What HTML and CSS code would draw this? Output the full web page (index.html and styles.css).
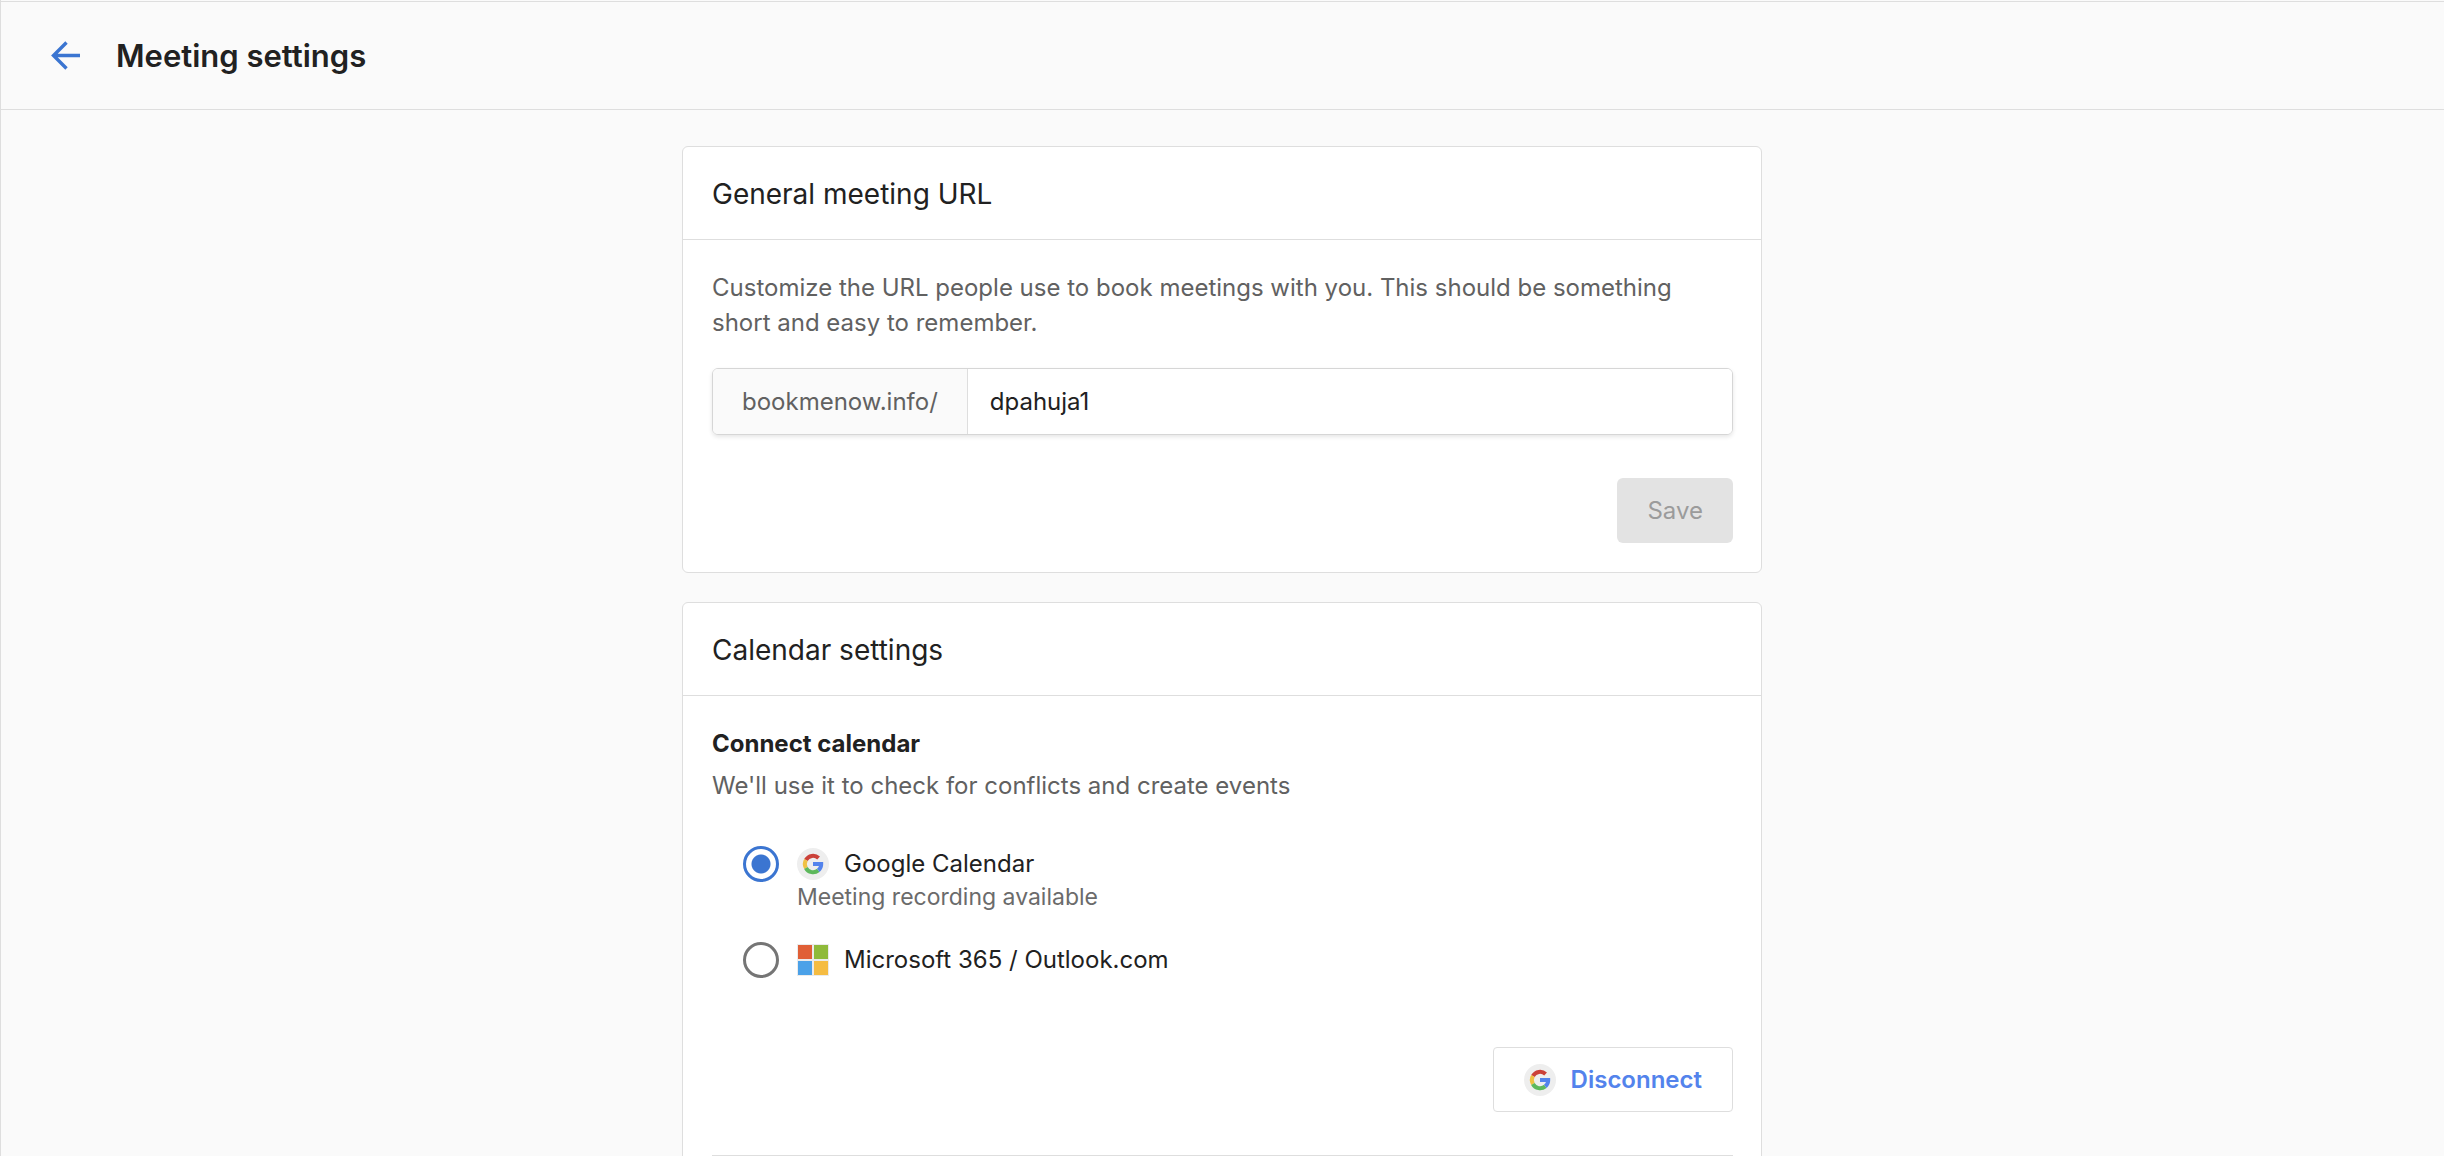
FILE: index.html
```html
<!DOCTYPE html>
<html lang="en">
<head>
    <meta charset="utf-8">
    <title>Meeting settings</title>
    <link rel="stylesheet" href="styles.css">
</head>
<body>
    <!-- Shared Google badge -->
    <svg class="sprite" aria-hidden="true">
        <symbol id="google" viewBox="0 0 32 32">
            <circle cx="16" cy="16" r="16" fill="#eeeeee"/>
            <g fill="none" stroke-width="4">
                <path d="M21.6 10A8.2 8.2 0 0 0 8.9 12" stroke="#cb4139"/>
                <path d="M8.9 12a8.2 8.2 0 0 0 0 8" stroke="#efc143"/>
                <path d="M8.9 20a8.2 8.2 0 0 0 12.4 2.4" stroke="#5db85c"/>
                <path d="M21.3 22.4A8.2 8.2 0 0 0 24.2 16H16" stroke="#5383ec"/>
            </g>
        </symbol>
    </svg>

    <header class="page-header">
        <a class="back" href="#" aria-label="Back">
            <svg width="30" height="30" viewBox="0 0 30 30">
                <path d="M16.5 1.5l-13 13 13 13M3.5 14.5H30" fill="none" stroke="#3b75d1" stroke-width="3.4"/>
            </svg>
        </a>
        <h1>Meeting settings</h1>
    </header>

    <main class="content">
        <section class="card">
            <h2 class="card-title">General meeting URL</h2>
            <form class="card-body">
                <label class="text" for="slug">Customize the URL people use to book meetings with you. This should be something short and easy to remember.</label>
                <div class="url-field">
                    <span class="url-prefix">bookmenow.info/</span>
                    <input class="url-input" id="slug" type="text" value="dpahuja1">
                </div>
                <div class="actions">
                    <button class="btn btn-save" type="button" disabled>Save</button>
                </div>
            </form>
        </section>

        <section class="card">
            <h2 class="card-title">Calendar settings</h2>
            <div class="card-body">
                <h3 class="subtitle">Connect calendar</h3>
                <p class="text">We'll use it to check for conflicts and create events</p>

                <div class="options">
                    <div class="option">
                        <input class="radio" type="radio" name="calendar" id="cal-google" checked>
                        <label for="cal-google">
                            <span class="option-name">
                                <svg width="32" height="32"><use href="#google"/></svg>
                                Google Calendar
                            </span>
                            <span class="option-note">Meeting recording available</span>
                        </label>
                    </div>
                    <div class="option">
                        <input class="radio" type="radio" name="calendar" id="cal-microsoft">
                        <label for="cal-microsoft">
                            <span class="option-name">
                                <svg width="32" height="32" viewBox="0 0 32 32">
                                    <path fill="#ebebeb" d="M0 0h32v32H0z"/>
                                    <path fill="#e05f36" d="M1 1h14v14H1z"/>
                                    <path fill="#8fba3a" d="M17 1h14v14H17z"/>
                                    <path fill="#4ba1e8" d="M1 17h14v14H1z"/>
                                    <path fill="#f5bc42" d="M17 17h14v14H17z"/>
                                </svg>
                                Microsoft 365 / Outlook.com
                            </span>
                        </label>
                    </div>
                </div>

                <div class="actions actions-last">
                    <button class="btn btn-outline" type="button">
                        <svg width="32" height="32"><use href="#google"/></svg>
                        Disconnect
                    </button>
                </div>
            </div>
        </section>
    </main>
</body>
</html>
```
FILE: styles.css
```css
* {
    box-sizing: border-box;
}
body {
    display: flex;
    flex-direction: column;
    height: 100vh;
    margin: 0;
    box-shadow: inset 1px 0 #dedede;
    background: #fafafa;
    color: #212121;
    font-family: Inter, "Liberation Sans", sans-serif;
    font-size: 24px;
    line-height: 35px;
}
h1, h2, h3, p {
    margin: 0;
}
button, input {
    font: inherit;
}
svg {
    display: block;
    flex-shrink: 0;
}
.sprite {
    position: absolute;
    width: 0;
    height: 0;
}

/* Header */
.page-header {
    display: flex;
    align-items: center;
    gap: 36px;
    margin-top: 1px;
    padding: 34px 50px 33px;
    border-top: 1px solid #dedede;
    border-bottom: 1px solid #dedede;
}
.page-header h1 {
    font-size: 31px;
    font-weight: 600;
    line-height: 40px;
}

/* Cards */
.content {
    display: flex;
    flex: 1;
    flex-direction: column;
    align-items: center;
    gap: 29px;
    min-height: 0;
    padding: 36px 0;
    overflow-y: auto;
    scrollbar-width: none;
}
.card {
    flex-shrink: 0;
    width: 100%;
    max-width: 1080px;
    border: 1px solid #dedede;
    border-radius: 6px;
    background: white;
}
.card-title {
    padding: 31px 29px 29px;
    border-bottom: 1px solid #dedede;
    font-size: 28px;
    font-weight: 400;
    line-height: 32px;
}
.card-body {
    padding: 30px 28px 29px 29px;
}
.text {
    display: block;
    color: #616161;
}
.subtitle {
    margin-bottom: 7px;
    font-size: 24px;
    font-weight: 700;
}

/* URL field */
.url-field {
    display: flex;
    height: 67px;
    margin-top: 28px;
    border: 1px solid #d6d6d6;
    border-radius: 6px;
    box-shadow: 0 2px 4px rgba(0,0,0,0.1);
    overflow: hidden;
}
.url-prefix {
    padding: 15px 29px;
    border-right: 1px solid #dedede;
    background: #fafafa;
    color: #616161;
}
.url-input {
    flex: 1;
    min-width: 0;
    padding: 0 22px;
    border: none;
    outline: none;
    background: white;
    color: #212121;
}

/* Buttons */
.actions {
    display: flex;
    justify-content: flex-end;
    margin-top: 43px;
}
.actions-last {
    margin-top: 69px;
    padding-bottom: 43px;
    border-bottom: 1px solid #dedede;
}
.btn {
    display: flex;
    align-items: center;
    gap: 15px;
    height: 65px;
    padding: 0 30px;
    border: none;
    border-radius: 6px;
}
.btn-save {
    background: #e3e3e3;
    color: #9b9b9b;
}
.btn-outline {
    border: 1px solid #dedede;
    border-radius: 4px;
    background: white;
    color: #5383ec;
    font-weight: 600;
    cursor: pointer;
}

/* Calendar options */
.options {
    display: flex;
    flex-direction: column;
    gap: 29px;
    margin-top: 43px;
    padding-left: 31px;
}
.option {
    display: flex;
    align-items: flex-start;
    gap: 18px;
}
.radio {
    appearance: none;
    flex-shrink: 0;
    width: 36px;
    height: 36px;
    margin: 0;
    border: 3px solid #757575;
    border-radius: 50%;
    background: white;
}
.radio:checked {
    border-color: #3b75d1;
    background: radial-gradient(circle, #3b75d1 9px, white 10px);
}
.option-name {
    display: flex;
    align-items: center;
    gap: 15px;
}
.option-note {
    display: block;
    color: #6b6b6b;
    font-size: 23px;
    line-height: 32px;
}
```
